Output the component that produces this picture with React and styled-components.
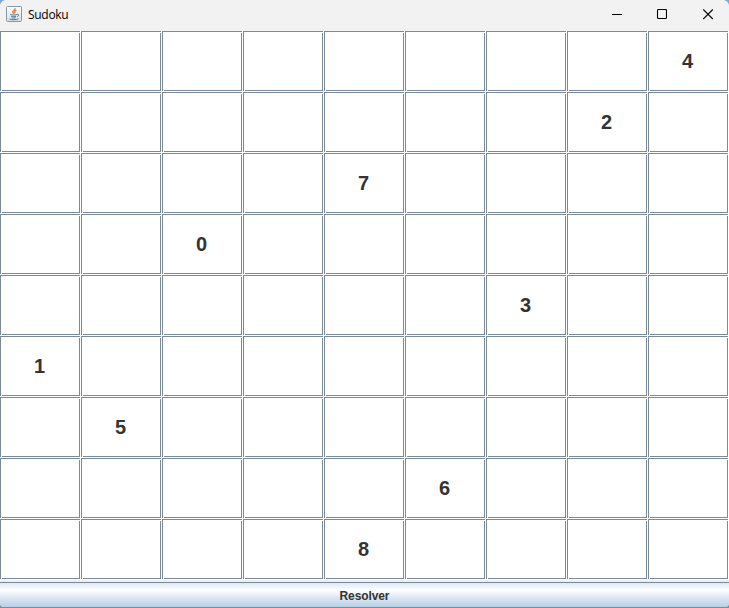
import React from "react";
import styled, { createGlobalStyle } from "styled-components";

const Global = createGlobalStyle`
  body { margin: 0; overflow: hidden; background: #f2f2f2; }
`;

const Window = styled.div`
  position: relative;
  width: 729px;
  height: 608px;
  display: flex;
  flex-direction: column;
  overflow: hidden;
  background: #eeeeee;
  font-family: "Liberation Sans", Arial, sans-serif;
`;

const Corners = styled.svg`
  position: absolute;
  inset: 0;
  pointer-events: none;
`;

const TitleBar = styled.header`
  height: 31px;
  flex: none;
  display: flex;
  align-items: center;
  background: #f2f2f2;
`;

const AppIcon = styled.svg`
  flex: none;
  margin: -3px 0 0 6px;
`;

const Title = styled.h1`
  flex: 1;
  margin: -2px 0 0 6px;
  font: 400 12px/16px "Open Sans", "Noto Sans", sans-serif;
  letter-spacing: -0.3px;
  color: #000;
`;

const Controls = styled.div`
  display: flex;
  height: 29px;
  align-self: flex-start;
`;

const ControlButton = styled.button`
  width: ${(p) => p.$width}px;
  padding: 0;
  border: 0;
  background: none;
  display: flex;
  align-items: center;
  justify-content: center;
`;

const Board = styled.main`
  display: grid;
  grid-template-columns: repeat(9, 81px);
  grid-template-rows: repeat(9, 61px);
  flex: none;
`;

const Cell = styled.div`
  box-sizing: border-box;
  padding: 0 2px 1px 0;
  display: flex;
  align-items: center;
  justify-content: center;
  background:
    linear-gradient(#7a8a99, #7a8a99) 0 0 / 80px 1px no-repeat,
    linear-gradient(#7a8a99, #7a8a99) 0 0 / 1px 60px no-repeat,
    linear-gradient(#7a8a99, #7a8a99) 2px 59px / 78px 1px no-repeat,
    linear-gradient(#7a8a99, #7a8a99) 79px 2px / 1px 58px no-repeat,
    #fff;
  color: #333;
  font-size: 20px;
  font-weight: 700;
  line-height: 22px;
`;

const SolveButton = styled.button`
  box-sizing: border-box;
  width: 729px;
  height: 26px;
  margin: 2px 0 0;
  padding: 2px 0 0;
  flex: none;
  border: 0 solid #7a8a99;
  border-width: 1px 0;
  background: linear-gradient(#dde8f3 0%, #ffffff 30%, #dde8f3 60%, #b8cfe5 100%);
  color: #333;
  font: 700 12px/15px "Liberation Sans", Arial, sans-serif;
  letter-spacing: -0.1px;
  text-align: center;
`;

const givens = {
  "0-8": 4, "1-7": 2, "2-4": 7, "3-2": 0, "4-6": 3,
  "5-0": 1, "6-1": 5, "7-5": 6, "8-4": 8,
};

const cells = Array.from({ length: 81 }, (_, i) => `${Math.floor(i / 9)}-${i % 9}`);

export default function App() {
  return (
    <>
      <Global />
      <Window>
        <TitleBar>
          <AppIcon width="16" height="16" viewBox="0 0 16 16" fill="none">
            <defs>
              <linearGradient id="tile" x1="0" y1="0" x2="0" y2="1">
                <stop offset="0" stopColor="#fff" />
                <stop offset="1" stopColor="#d5dde5" />
              </linearGradient>
            </defs>
            <rect x="0.5" y="0.5" width="15" height="15" rx="1" fill="url(#tile)" stroke="#8298ac" />
            <path d="M8.9 2.2c.8 1.6-2.8 2.5-2 4.1.2.6.8 1 .9 1.5M10.4 4.2c-2 .9-2.1 1.7-1.4 2.9" stroke="#e9882f" strokeWidth="1.5" />
            <path d="M4.4 8.5c1.5.7 5 .6 6.4 0M5.2 10.2c1.3.6 3.7.6 4.8 0M5.6 11.7c1.1.5 3 .5 4 0M11 8.5c2.3-.6 2 1.6.2 2.1M3.5 13c1.8 1 6.9.9 8.8-.1" stroke="#527391" strokeWidth="1" />
          </AppIcon>
          <Title>Sudoku</Title>
          <Controls>
            <ControlButton $width={37} aria-label="Minimize">
              <svg width="11" height="11" shapeRendering="crispEdges"><path d="M1 5.5h10" stroke="#000" /></svg>
            </ControlButton>
            <ControlButton $width={53} aria-label="Maximize">
              <svg width="11" height="11" fill="none"><rect x="1.5" y=".5" width="9" height="9" rx="1" stroke="#000" strokeWidth="1.1" /></svg>
            </ControlButton>
            <ControlButton $width={41} aria-label="Close">
              <svg width="11" height="11"><path d="M.2 0.5l9.6 9.5M9.8 .5l-9.6 9.5" stroke="#000" strokeWidth="1.1" /></svg>
            </ControlButton>
          </Controls>
        </TitleBar>
        <Board>
          {cells.map((key) => <Cell key={key}>{givens[key]}</Cell>)}
        </Board>
        <SolveButton>Resolver</SolveButton>
        <Corners width="729" height="608">
          <path d="M0 0h5Q1 1 0 5zM729 0h-5q4 1 5 5z" fill="#7fa8d2" />
          <path d="M0 608v-3q1 2 4 3zM729 608v-3q-1 2-4 3z" fill="#8b8b8b" />
        </Corners>
      </Window>
    </>
  );
}
